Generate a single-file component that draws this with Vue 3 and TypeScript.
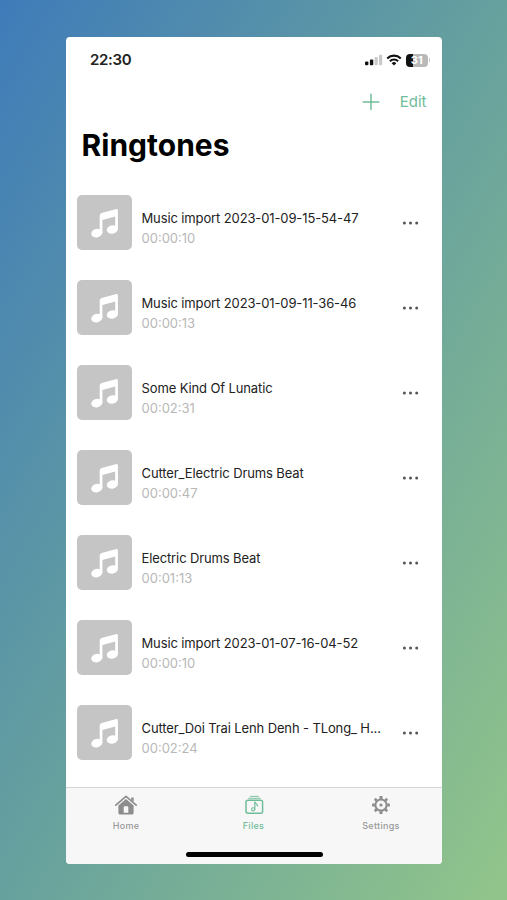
<script setup lang="ts">
interface Track {
  name: string
  length: string
}

const tracks: Track[] = [
  { name: 'Music import 2023-01-09-15-54-47', length: '00:00:10' },
  { name: 'Music import 2023-01-09-11-36-46', length: '00:00:13' },
  { name: 'Some Kind Of Lunatic', length: '00:02:31' },
  { name: 'Cutter_Electric Drums Beat', length: '00:00:47' },
  { name: 'Electric Drums Beat', length: '00:01:13' },
  { name: 'Music import 2023-01-07-16-04-52', length: '00:00:10' },
  { name: 'Cutter_Doi Trai Lenh Denh - TLong_ H...', length: '00:02:24' },
]
</script>

<template>
  <div class="backdrop">
    <main class="phone">
      <header class="status">
        <span class="clock">22:30</span>
        <div class="indicators">
          <svg class="signal" width="18" height="12" viewBox="0 0 18 12">
            <rect x="0" y="7.4" width="3.4" height="3.8" rx="1" fill="#111" />
            <rect x="4.9" y="5.4" width="3.4" height="5.8" rx="1" fill="#111" />
            <rect x="9.6" y="3" width="3.2" height="8.2" rx="1" fill="#c9c9c9" />
            <rect x="14" y="0.7" width="3.2" height="10.5" rx="1" fill="#c9c9c9" />
          </svg>
          <svg class="wifi" width="16" height="12" viewBox="0 0 16 12" fill="none" stroke="#111" stroke-width="2.1">
            <path d="M1.2 4.4C5 .7 11 .7 14.8 4.4" />
            <path d="M3.9 7.2c2.3-2.2 5.9-2.2 8.2 0" />
            <path d="M8 11.6 5.7 9.2a3.3 3.3 0 0 1 4.6 0Z" fill="#111" stroke="none" />
          </svg>
          <div class="battery"><span>31</span></div>
          <i class="battery-tip"></i>
        </div>
      </header>

      <nav class="actions">
        <svg width="18" height="18" viewBox="0 0 18 18" stroke="#70bd99" stroke-width="1.5" stroke-linecap="round">
          <path d="M9 1.2v15.4M1.2 9h15.6" />
        </svg>
        <span class="edit">Edit</span>
      </nav>

      <h1>Ringtones</h1>

      <ul class="tracks">
        <li v-for="track in tracks" :key="track.name" class="track">
          <div class="cover">
            <svg width="28" height="32" viewBox="0 0 28 32">
              <ellipse cx="5.8" cy="26.1" rx="5.6" ry="4.2" transform="rotate(-14 5.8 26.1)" fill="#fff" />
              <ellipse cx="21.3" cy="22.5" rx="5.6" ry="4.2" transform="rotate(-14 21.3 22.5)" fill="#fff" />
              <path d="M8.7 9.3c0-2 .8-3 2.8-3.5L24.6 2.2c1.5-.4 2.3.2 2.3 1.6v18.7h-2.7V9.4L11.4 13v13H8.7Z" fill="#fff" />
            </svg>
          </div>
          <div class="info">
            <p class="name">{{ track.name }}</p>
            <p class="length">{{ track.length }}</p>
          </div>
          <svg class="more" width="18" height="4" viewBox="0 0 18 4" fill="#555">
            <circle cx="2.4" cy="2" r="1.5" />
            <circle cx="8.5" cy="2" r="1.5" />
            <circle cx="14.7" cy="2" r="1.5" />
          </svg>
        </li>
      </ul>

      <footer class="dock">
        <div class="tabs">
          <div class="tab">
            <svg width="24" height="22" viewBox="0 0 24 22">
              <path d="M1.8 11.2 12 2.4l10.2 8.8" fill="none" stroke="#8d8d8d" stroke-width="1.7" stroke-linecap="round" stroke-linejoin="round" />
              <path d="M17.2 3.5h2.5v4.3l-2.5-2Z" fill="#8d8d8d" />
              <path fill-rule="evenodd" d="m12 4.9 7.6 6.6v7.2c0 1.2-.6 1.8-1.8 1.8H6.2c-1.2 0-1.8-.6-1.8-1.8v-7.2ZM9.7 13.2v5.5h4.6v-5.5c0-.7-.3-1-.9-1h-2.8c-.6 0-.9.3-.9 1Z" fill="#8d8d8d" />
            </svg>
            <span>Home</span>
          </div>
          <div class="tab active">
            <svg width="24" height="22" viewBox="0 0 24 22" fill="none" stroke="#70bd99" stroke-linecap="round">
              <path d="M8.4 2.4h8" stroke-width="0.9" />
              <path d="M6.6 4.3h11.6" stroke-width="0.9" />
              <rect x="4" y="6.2" width="16.6" height="13" rx="2" stroke-width="1.5" />
              <path d="M12.8 15.2V7.6c.2 1.8 2.8 2 2.6 4.4" stroke-width="1.2" />
              <circle cx="11.1" cy="15.3" r="1.6" stroke-width="1.1" />
            </svg>
            <span>Files</span>
          </div>
          <div class="tab">
            <svg width="24" height="22" viewBox="0 0 24 22" stroke="#8d8d8d" fill="none">
              <circle cx="12" cy="11" r="5.6" stroke-width="2" />
              <g stroke-width="3">
                <path d="M12 2.1v2.8M12 17.1v2.8M3.1 11h2.8M18.1 11h2.8" />
                <path d="m5.8 4.8 1.8 1.8M16.4 15.4l1.8 1.8M5.8 17.2l1.8-1.8M16.4 6.6l1.8-1.8" stroke-width="2.7" />
              </g>
              <circle cx="12" cy="11" r="1.6" fill="#8d8d8d" stroke="none" />
            </svg>
            <span>Settings</span>
          </div>
        </div>
        <div class="home-indicator"></div>
      </footer>
    </main>
  </div>
</template>

<style>
body {
  margin: 0;
}
</style>

<style scoped>
.backdrop {
  box-sizing: border-box;
  width: 507px;
  height: 900px;
  padding: 37px 65px 36px 66px;
  background: linear-gradient(to bottom right, #3f7bb9 0%, #67a19e 50%, #92c58a 100%);
  font-family: Inter, "Liberation Sans", sans-serif;
}
.phone {
  display: flex;
  flex-direction: column;
  width: 376px;
  height: 827px;
  overflow: hidden;
  border-radius: 4px;
  background: #fff;
}
.status {
  display: flex;
  flex: none;
  align-items: center;
  justify-content: space-between;
  height: 46px;
  padding: 0 12px 0 24px;
}
.clock {
  font-size: 15px;
  font-weight: 600;
  line-height: 20px;
  letter-spacing: -0.3px;
  color: #222;
}
.indicators {
  display: flex;
  align-items: center;
}
.wifi {
  margin: 0 4px 0 3px;
}
.battery {
  width: 22.5px;
  height: 13px;
  border-radius: 4px;
  background: linear-gradient(90deg, #111 33%, #b9b9b9 33%);
  color: #fff;
  font-size: 11px;
  font-weight: 700;
  line-height: 13px;
  text-align: center;
}
.battery-tip {
  width: 1px;
  height: 4px;
  margin-left: 1px;
  border-radius: 0 1px 1px 0;
  background: #c4c4c4;
}
.actions {
  display: flex;
  flex: none;
  align-items: center;
  justify-content: flex-end;
  gap: 20px;
  height: 38px;
  padding-right: 15.5px;
}
.edit {
  color: #70bd99;
  font-size: 15px;
  line-height: 20px;
}
h1 {
  flex: none;
  margin: 4px 0 0 15.6px;
  font-size: 30px;
  font-weight: 700;
  line-height: 40px;
  color: #000;
}
.tracks {
  display: flex;
  flex: 1;
  flex-direction: column;
  gap: 30px;
  margin: 0;
  padding: 30px 0 0;
  list-style: none;
}
.track {
  display: flex;
  flex: none;
  align-items: center;
  height: 55px;
  padding: 0 22px 0 11px;
}
.cover {
  display: flex;
  align-items: center;
  justify-content: center;
  width: 55px;
  height: 55px;
  border-radius: 5px;
  background: #c5c5c5;
}
.info {
  flex: 1;
  margin-left: 9.5px;
  padding-top: 10px;
}
.info p {
  margin: 0;
  font-size: 13px;
  line-height: 20px;
  white-space: nowrap;
}
.name {
  letter-spacing: -0.12px;
  color: #222;
}
.length {
  color: #b8b8b8;
}
.dock {
  box-sizing: border-box;
  flex: none;
  height: 77px;
  border-top: 1px solid #d5d5d5;
  background: #f7f7f7;
}
.tabs {
  display: flex;
  justify-content: space-between;
  padding: 6px 31px 0 30px;
}
.tab {
  display: flex;
  flex-direction: column;
  align-items: center;
  width: 60px;
  color: #999;
  font-size: 9px;
  font-weight: 500;
  line-height: 12px;
  letter-spacing: 0.3px;
}
.tab span {
  margin-top: 4px;
}
.active {
  color: #70bd99;
}
.home-indicator {
  width: 137px;
  height: 5px;
  margin: 20px auto 0;
  border-radius: 3px;
  background: #000;
}
</style>
